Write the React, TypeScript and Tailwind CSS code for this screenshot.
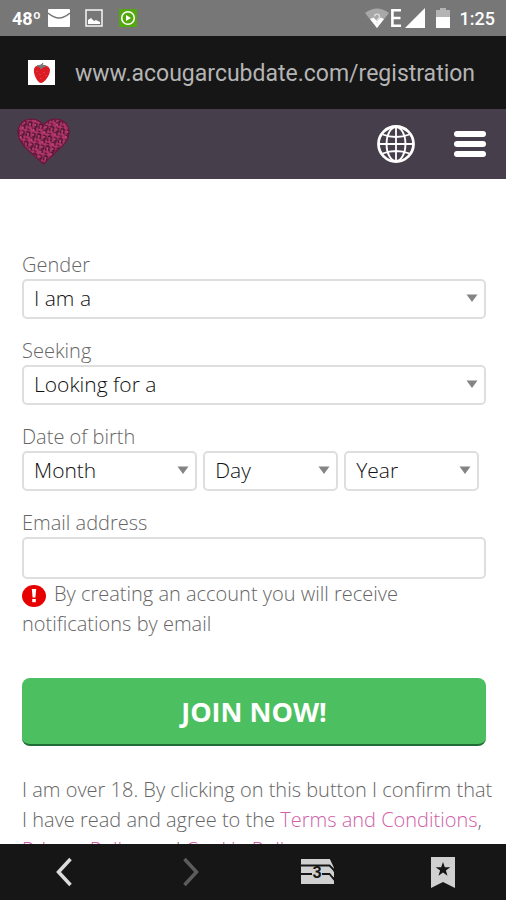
import type { ReactNode } from "react";

const LIGHT = "font-['Open_Sans',sans-serif] font-light";

function Dropdown({ id, text, label }: { id: string; text: string; label?: string }) {
  return (
    <div className="relative">
      <select
        id={id}
        aria-label={label}
        className="block h-10 w-full appearance-none rounded-[5px] border-2 border-[#dedede] bg-white pl-[10px] pr-7 text-[21px] text-[#111]"
      >
        <option>{text}</option>
      </select>
      <svg
        viewBox="0 0 12 8"
        className="pointer-events-none absolute right-2 top-[15px] h-2 w-3"
        fill="#848484"
        aria-hidden="true"
      >
        <path d="M0.500 0.500h11L6 8z" />
      </svg>
    </div>
  );
}

function Field({ id, label, children }: { id: string; label: string; children: ReactNode }) {
  return (
    <div>
      <label htmlFor={id} className="block text-[20px] leading-7">
        {label}
      </label>
      {children}
    </div>
  );
}

function StatusBar() {
  return (
    <div className="flex h-9 shrink-0 items-center bg-[#777] pl-3 pr-[11px] font-[Roboto,sans-serif] text-white">
      <span className="w-9 text-[18px] font-bold">48º</span>
      <svg viewBox="0 0 22 18" className="h-[18px] w-[22px]" aria-hidden="true">
        <rect width="22" height="18" rx="1" fill="#fff" />
        <path d="M0 4q6 5 11 5t11-5" fill="none" stroke="#777" strokeWidth="1.500" />
      </svg>
      <svg viewBox="0 0 18 18" className="ml-[15px] h-[18px] w-[18px]" aria-hidden="true">
        <rect x="1" y="1" width="16" height="16" fill="none" stroke="#eee" strokeWidth="1.600" />
        <path d="M3 15v-4l3-2 3 3 2-1 4 2v2z" fill="#fff" />
      </svg>
      <svg viewBox="0 0 18 18" className="ml-4 h-[18px] w-[18px]" aria-hidden="true">
        <rect width="18" height="18" rx="1" fill="#52a80c" />
        <circle cx="9" cy="9" r="6.300" fill="none" stroke="#fff" strokeWidth="1.600" />
        <path d="M7 6l5 3-5 3z" fill="#fff" />
      </svg>
      <svg viewBox="0 0 24 20" className="ml-auto h-5 w-6" aria-hidden="true">
        <path d="M0 5Q12-4 24 5L12 20z" fill="#a8a8a8" />
        <path d="M5 11l3.500-1.500L12 13l3.500-3.500L19 11l-7 9z" fill="#fff" />
        <path d="M9.500 8.500a2.500 2.500 0 1 1 3.800 2.200c-1 .6-1.300 1-1.300 2M12 14v1.500" fill="none" stroke="#ddd" strokeWidth="1.300" />
      </svg>
      <svg viewBox="0 0 10 18" className="ml-[2px] h-[18px] w-[10px]" fill="none" stroke="#fff" strokeWidth="2.600" aria-hidden="true">
        <path d="M10 1.300H1.400v15.400H10M1.400 9H9.500" />
      </svg>
      <svg viewBox="0 0 20 20" className="ml-1 h-5 w-5" aria-hidden="true">
        <path d="M20 0v20H0z" fill="#fff" />
      </svg>
      <svg viewBox="0 0 14 20" className="ml-[11px] h-5 w-[14px]" aria-hidden="true">
        <path d="M4 0h6v2h4v7H0V2h4z" fill="#b4b4b4" />
        <path d="M0 9h14v11H0z" fill="#fff" />
      </svg>
      <span className="ml-[10px] text-[18px] font-medium">1:25</span>
    </div>
  );
}

function AddressBar() {
  return (
    <div className="flex h-[73px] shrink-0 items-center bg-[#161616] pl-7">
      <svg viewBox="0 0 27 25" className="h-[25px] w-[27px]" aria-hidden="true">
        <rect width="27" height="25" fill="#fff" />
        <path d="M6 9c1-4 5-4 7-3 3-1 8-1 9 4 0 6-6 13-9 13S5 15 6 9z" fill="#dc1c24" />
        <path d="M13 5l-4 1 3 1 1 2 2-2 3-1-4-1 1-2z" fill="#787878" stroke="#787878" />
        <path d="M9 11v1M12 14v1M16 12v1M13 18v1M18 15v1" stroke="#ee5555" />
      </svg>
      <span className="ml-5 pt-1 font-[Roboto,sans-serif] text-[23px] font-normal text-[#b4b4b4]">
        www.acougarcubdate.com/registration
      </span>
    </div>
  );
}

function SiteHeader() {
  return (
    <header className="flex h-[70px] shrink-0 items-center bg-[#463e4b] pl-[17px] pr-5">
      <a href="#" aria-label="Home" className="mb-[6px]">
        <svg viewBox="0 0 53 47" className="h-[47px] w-[53px]" aria-hidden="true">
          <defs>
            <pattern id="spots" width="11" height="10" patternUnits="userSpaceOnUse" patternTransform="rotate(12)">
              <rect width="11" height="10" fill="#b0336a" />
              <path
                d="M1 2q2-2 4 0l-1 3M1 3l1 3M7 1l3 1v3L8 4M6 7l3-1 1 3M1 8l3 1M5 4v2"
                fill="none"
                stroke="#431326"
                strokeWidth="1.300"
              />
              <path d="M3 4h1M8 3h1M7 8h1" stroke="#e46ca0" />
            </pattern>
          </defs>
          <path
            d="M26.500 8C31-1 45-1 50 7c5 9 0 17-7 23L26.500 46 9 30C3 24-2 16 3 7 8-1 22-1 26.500 8z"
            fill="url(#spots)"
            stroke="#6c1739"
            strokeWidth="1.200"
          />
        </svg>
      </a>
      <button type="button" aria-label="Language" className="ml-auto">
        <svg viewBox="0 0 38 38" className="h-[38px] w-[38px]" fill="none" stroke="#fff" aria-hidden="true">
          <circle cx="19" cy="19" r="17.500" strokeWidth="2.800" />
          <g strokeWidth="1.800">
            <ellipse cx="19" cy="19" rx="9.500" ry="17" />
            <path d="M19 2v34M2 19h34M5.500 9.500Q19 14.500 32.500 9.500M5.500 28.500Q19 23.500 32.500 28.500" />
          </g>
        </svg>
      </button>
      <button type="button" aria-label="Menu" className="ml-[39px] flex flex-col gap-1">
        <span className="h-[6px] w-8 rounded-full bg-white" />
        <span className="h-[6px] w-8 rounded-full bg-white" />
        <span className="h-[6px] w-8 rounded-full bg-white" />
      </button>
    </header>
  );
}

function BrowserNav() {
  return (
    <nav className="grid h-14 shrink-0 grid-cols-4 items-center justify-items-center bg-[#161616]">
      <button type="button" aria-label="Back">
        <svg viewBox="0 0 18 30" className="h-[30px] w-[18px]" fill="none" stroke="#dcdcdc" strokeWidth="3.500" aria-hidden="true">
          <path d="M16.500 2l-12 13 12 13" />
        </svg>
      </button>
      <button type="button" aria-label="Forward">
        <svg viewBox="0 0 18 30" className="h-[30px] w-[18px]" fill="none" stroke="#5c5c5c" strokeWidth="3.500" aria-hidden="true">
          <path d="M3.500 2l12 13-12 13" />
        </svg>
      </button>
      <button type="button" aria-label="Tabs" className="pl-1">
        <svg viewBox="0 0 34 26" className="h-[26px] w-[34px]" aria-hidden="true">
          <path d="M0 0h29l4 9v16H0z" fill="#d0d0d0" />
          <path d="M0 6.500h28.500l5 5M0 15h11M21 15h7.500l5 6" fill="none" stroke="#161616" strokeWidth="1.800" />
          <path d="M29 0l5 8V0zM30 8l4 7v-4zM30 17l4 6v-4z" fill="#161616" />
          <text x="16" y="19" textAnchor="middle" fontFamily="Roboto, sans-serif" fontWeight="700" fontSize="16" fill="#161616">
            3
          </text>
        </svg>
      </button>
      <button type="button" aria-label="Bookmarks">
        <svg viewBox="0 0 24 31" className="h-[31px] w-6" aria-hidden="true">
          <path d="M0 0h24v31l-12-6-12 6z" fill="#d0d0d0" />
          <path d="M12 5l1.800 5.200h5.500l-4.400 3.300 1.600 5.300-4.500-3.200-4.500 3.200 1.600-5.300-4.400-3.300h5.500z" fill="#161616" />
        </svg>
      </button>
    </nav>
  );
}

export default function App() {
  return (
    <div className={`flex h-screen flex-col bg-white ${LIGHT}`}>
      <StatusBar />
      <AddressBar />
      <SiteHeader />
      <main className="min-h-0 flex-1 overflow-hidden pl-[22px] pr-5 pt-[72px] text-[#666]">
        <form>
          <div className="flex flex-col gap-[18px]">
            <Field id="gender" label="Gender">
              <Dropdown id="gender" text="I am a" />
            </Field>
            <Field id="seeking" label="Seeking">
              <Dropdown id="seeking" text="Looking for a" />
            </Field>
            <Field id="month" label="Date of birth">
              <div className="grid grid-cols-[13fr_10fr_10fr] gap-[6px] pr-[7px]">
                <Dropdown id="month" text="Month" />
                <Dropdown id="day" text="Day" label="Day" />
                <Dropdown id="year" text="Year" label="Year" />
              </div>
            </Field>
            <Field id="email" label="Email address">
              <input
                id="email"
                type="email"
                className="block h-[42px] w-full rounded-[5px] border-2 border-[#dedede] px-[10px] text-[21px] text-[#111]"
              />
            </Field>
          </div>
          <p className="text-[20px] leading-[30px]">
            <svg viewBox="0 0 24 22" className="mr-2 inline-block h-[22px] w-6" aria-hidden="true">
              <ellipse cx="12" cy="11" rx="12" ry="11" fill="#e60000" />
              <path d="M9.800 4h4.400l-.8 8.500h-2.800z" fill="#fff" />
              <rect x="10.200" y="14" width="3.600" height="3.200" fill="#fff" />
            </svg>
            By creating an account you will receive notifications by email
          </p>
          <button
            type="submit"
            className="mt-[39px] h-[68px] w-full rounded-lg border-b-2 border-[#216b35] bg-[#4cbf60] pt-[2px] text-[27px] font-bold text-white"
          >
            JOIN NOW!
          </button>
          <p className="-mr-[10px] mt-[29px] text-[20px] leading-[30px]">
            I am over 18. By clicking on this button I confirm that I have read and agree to the{" "}
            <a href="#" className="text-[#d060a8]">Terms and Conditions</a>,{" "}
            <a href="#" className="text-[#d060a8]">Privacy Policy</a> and{" "}
            <a href="#" className="text-[#d060a8]">Cookie Policy</a>.
          </p>
        </form>
      </main>
      <BrowserNav />
    </div>
  );
}
